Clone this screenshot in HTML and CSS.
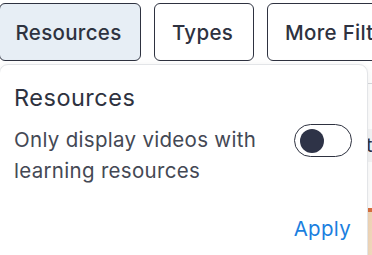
FILE: index.html
```html
<!DOCTYPE html>
<html lang="en">

<head>
    <meta charset="UTF-8">
    <meta name="viewport" content="width=device-width, initial-scale=1.0">
    <title>Video Filters</title>
    <link rel="stylesheet" href="styles.css">
</head>

<body>
    <!-- filter buttons -->
    <div class="filter-bar">
        <button class="filter-btn active">Resources</button>
        <button class="filter-btn types">Types</button>
        <button class="filter-btn more">More Filters</button>
    </div>

    <!-- page content behind the popup -->
    <div class="results">
        <div class="results-head"></div>
        <div class="results-row">the latest videos</div>
        <div class="results-thumb"></div>
    </div>

    <!-- resources popup -->
    <div class="popup">
        <h2 class="popup-title">Resources</h2>
        <div class="popup-option">
            <p>Only display videos with learning resources</p>
            <span class="toggle"><span class="knob"></span></span>
        </div>
        <div class="popup-actions">
            <a href="#" class="apply">Apply</a>
        </div>
    </div>
</body>

</html>
```

FILE: styles.css
```css
/* page */
body {
    margin: 0;
    font-family: Inter, "Noto Sans", sans-serif;
    background: #fff;
    color: #2e3240;
    position: relative;
    overflow: hidden;
    height: 255px;
}

/* filter buttons */
.filter-bar {
    display: flex;
    gap: 13px;
    padding-top: 3px;
    margin-left: -1px;
    white-space: nowrap;
    overflow: hidden;
}

.filter-btn {
    height: 58px;
    padding: 0;
    font-family: inherit;
    font-size: 20.5px;
    font-weight: 500;
    letter-spacing: 0.3px;
    color: #2e3240;
    background: #fff;
    border: 1.5px solid #2e3240;
    border-radius: 6px;
    flex-shrink: 0;
}

.filter-btn.active {
    width: 142px;
    padding-right: 3px;
    background: #e7eef5;
}

.filter-btn.types {
    width: 100px;
    padding-right: 3px;
}

.filter-btn.more {
    width: 170px;
    padding-left: 17px;
    text-align: left;
}

/* content behind */
.results {
    margin-top: 22px;
}

.results-head {
    border-top: 1px solid #d7d9dd;
}

.results-row {
    margin-top: 45px;
    height: 33px;
    line-height: 33px;
    padding-left: 366px;
    background: #f4f5f6;
    font-size: 20px;
    white-space: nowrap;
    overflow: hidden;
}

.results-thumb {
    margin-top: 46px;
    height: 60px;
    background: linear-gradient(#d9703f 0, #d9703f 4px, #f2d7b8 4px, #f4dcc0);
}

/* popup */
.popup {
    position: absolute;
    top: 64px;
    left: -1px;
    width: 353px;
    height: 200px;
    padding: 16px 0 0 14px;
    background: #fff;
    border: 1px solid #e3e5e8;
    border-radius: 9px;
    box-shadow: 0 2px 8px rgba(0, 0, 0, 0.08);
}

.popup-title {
    margin: 0;
    font-size: 23.5px;
    font-weight: 400;
    letter-spacing: 0.5px;
    color: #2e3240;
    line-height: 34px;
}

.popup-option {
    display: flex;
    align-items: flex-start;
    justify-content: space-between;
    margin-top: 9px;
}

.popup-option p {
    margin: 0;
    width: 262px;
    font-size: 20.5px;
    letter-spacing: 0.3px;
    line-height: 31px;
    color: #444854;
}

/* toggle switch */
.toggle {
    display: flex;
    align-items: center;
    width: 58px;
    height: 33px;
    margin: 0 15px 0 0;
    border: 1.5px solid #2e3240;
    border-radius: 17px;
    box-sizing: border-box;
    padding-left: 5px;
}

.knob {
    width: 24px;
    height: 24px;
    border-radius: 50%;
    background: #2e3347;
}

.popup-actions {
    display: flex;
    justify-content: flex-end;
    margin-top: 30px;
    padding-right: 16px;
}

.apply {
    font-size: 20.5px;
    letter-spacing: 0.3px;
    color: #1b7fe0;
    text-decoration: none;
}
```
